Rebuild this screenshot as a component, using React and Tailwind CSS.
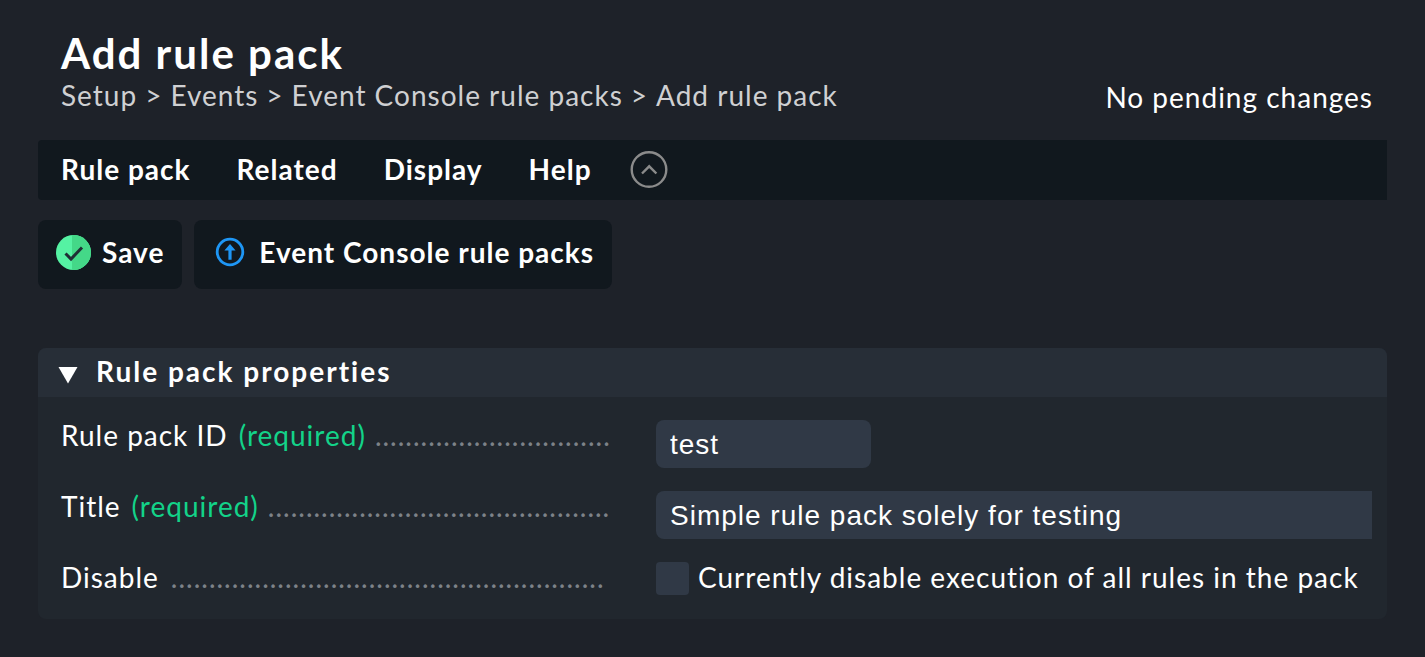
import { useState } from "react";

const crumbs = ["Setup", "Events", "Event Console rule packs", "Add rule pack"];
const menus = ["Rule pack", "Related", "Display", "Help"];

function SaveIcon() {
  return (
    <svg width="35" height="35" viewBox="0 0 35 35" className="shrink-0" aria-hidden="true">
      <circle cx="17.5" cy="17.5" r="17.5" fill="#55f2a3" />
      <path d="M16 .1 17.500 0a17.500 17.500 0 0 1 0 35H16z" fill="#44d888" />
      <path d="M9.500 18.500l5.500 5.500L26 12.500" fill="none" stroke="#1f2f35" strokeWidth="3" />
    </svg>
  );
}

function UpIcon() {
  return (
    <svg width="30" height="30" viewBox="0 0 30 30" className="shrink-0" aria-hidden="true">
      <circle cx="15" cy="15" r="12.800" fill="none" stroke="#1e96f5" strokeWidth="2.800" />
      <path d="M15 7l5.600 6.500h-4v9.300h-3.200v-9.300h-4z" fill="#1e96f5" />
    </svg>
  );
}

function Row({ id, label, required, dots, children }) {
  return (
    <div className="flex items-start gap-[46px]">
      <label htmlFor={id} className="flex w-[549px] shrink-0 whitespace-nowrap leading-[30px]">
        {label}
        {required && <span className="ml-[11px] text-[#13d389]">(required)</span>}
        <span aria-hidden="true" className={`text-[#7d8288] ${required ? "ml-[9px]" : "ml-3"}`}>
          {".".repeat(dots)}
        </span>
      </label>
      {children}
    </div>
  );
}

export default function App() {
  const [open, setOpen] = useState(true);
  const [packId, setPackId] = useState("test");
  const [title, setTitle] = useState("Simple rule pack solely for testing");
  const [disabled, setDisabled] = useState(false);

  return (
    <div className="min-h-screen bg-[#1e2229] pt-[31px] pr-[38px] pb-10 pl-[38px] font-['Lato',sans-serif] text-[28px] tracking-[1px] text-white">
      <header className="flex items-end justify-between pr-[14px] pl-[23px]">
        <div>
          <h1 className="text-[42px] leading-[44px] font-bold tracking-[2px]">Add rule pack</h1>
          <nav aria-label="Breadcrumb" className="flex gap-2 leading-[41px] text-[#cfd0d2]">
            {crumbs.map((crumb, idx) => (
              <span key={crumb} className="flex gap-2">
                {idx > 0 && <span>&gt;</span>}
                <a href="#">{crumb}</a>
              </span>
            ))}
          </nav>
        </div>
        <span className="leading-[38px]">No pending changes</span>
      </header>

      {/* Menu bar */}
      <nav className="mt-6 flex h-[60px] items-center gap-[46px] rounded-l bg-[#11181e] pb-[3px] pl-[23px] font-bold">
        {menus.map((menu) => (
          <button key={menu} className="leading-10">{menu}</button>
        ))}
        <button aria-label="Hide actions" className="-ml-2">
          <svg width="38" height="38" viewBox="0 0 38 38" fill="none" stroke="#8b8b8b" strokeWidth="2.400">
            <circle cx="19" cy="19.5" r="17.300" />
            <path d="M12 23.500l7.200-7.200 7.200 7.200" />
          </svg>
        </button>
      </nav>

      {/* Actions */}
      <div className="mt-5 flex gap-3 font-bold">
        <button className="flex h-[69px] items-center gap-[11px] rounded-lg bg-[#11181e] px-[18px] pb-[5px]">
          <SaveIcon />
          Save
        </button>
        <button className="flex h-[69px] items-center gap-[14px] rounded-lg bg-[#11181e] pr-[18px] pb-[5px] pl-[21px]">
          <UpIcon />
          Event Console rule packs
        </button>
      </div>

      <section className="mt-[59px] overflow-hidden rounded-lg bg-[#21272e]">
        <h2 className="bg-[#272e37] font-bold">
          <button
            onClick={() => setOpen(!open)}
            aria-expanded={open}
            className="flex h-[49px] w-full items-center gap-[18px] pb-1 pl-5 tracking-[2px]"
          >
            <svg width="20" height="18" viewBox="0 0 20 18" aria-hidden="true" className={open ? "mt-2" : "mt-2 -rotate-90"}>
              <path d="M.5 1h19L10 17.500z" fill="#fff" />
            </svg>
            Rule pack properties
          </button>
        </h2>
        {open && (
          <div className="flex flex-col gap-[23px] pt-[23px] pb-6 pl-[23px]">
            <Row id="pack-id" label="Rule pack ID" required dots={31}>
              <input
                id="pack-id"
                value={packId}
                onChange={(e) => setPackId(e.target.value)}
                className="h-12 w-[215px] rounded-lg bg-[#303946] px-[14px] pt-[2px] font-['Liberation_Sans',sans-serif] outline-none"
              />
            </Row>
            <Row id="title" label="Title" required dots={45}>
              <input
                id="title"
                value={title}
                onChange={(e) => setTitle(e.target.value)}
                className="mr-[15px] h-12 min-w-0 flex-1 rounded-l-lg bg-[#303946] px-[14px] pt-[2px] font-['Liberation_Sans',sans-serif] outline-none"
              />
            </Row>
            <Row id="disable" label="Disable" dots={57}>
              <label className="flex items-start gap-[9px] leading-[30px]">
                <input
                  id="disable"
                  type="checkbox"
                  checked={disabled}
                  onChange={(e) => setDisabled(e.target.checked)}
                  className="size-[33px] appearance-none rounded bg-[#303946] checked:bg-[#13d389]"
                />
                Currently disable execution of all rules in the pack
              </label>
            </Row>
          </div>
        )}
      </section>
    </div>
  );
}
